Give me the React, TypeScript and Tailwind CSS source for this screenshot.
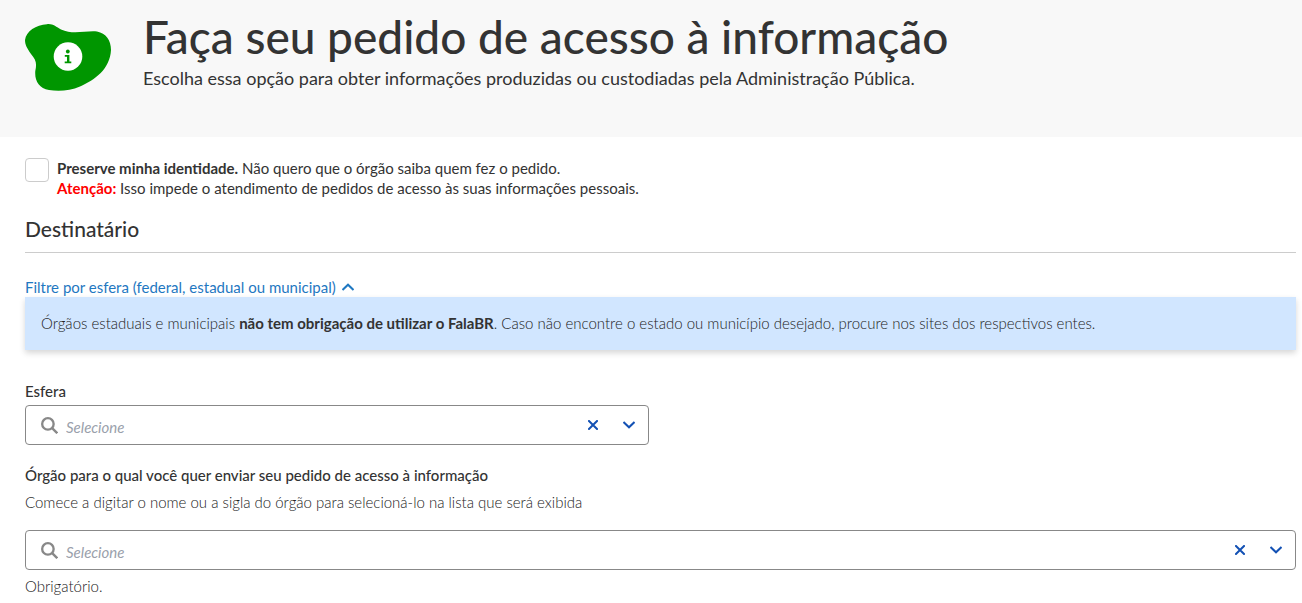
import React, { useState } from 'react';

interface SearchSelectProps {
  id: string;
  value: string;
  onChange: (value: string) => void;
}

const SearchSelect: React.FC<SearchSelectProps> = ({ id, value, onChange }) => {
  return (
    <div className="flex h-10 items-center rounded border border-[#888] bg-white pl-[15px] pr-[7px]">
      <svg className="h-[17px] w-[17px] shrink-0 text-[#888]" viewBox="0 0 16 16" fill="none" stroke="currentColor" strokeWidth="2.2" aria-hidden="true">
        <circle cx="6.500" cy="6.500" r="5.400" />
        <path d="M10.500 10.500L15.300 15.300" />
      </svg>
      <input
        id={id}
        type="text"
        value={value}
        onChange={(e) => onChange(e.target.value)}
        placeholder="Selecione"
        className="ml-2 min-w-0 flex-1 bg-transparent pt-1 text-[15px] outline-none placeholder:italic placeholder:text-[#9a9fab]"
      />
      <button type="button" aria-label="Limpar" onClick={() => onChange('')} className="flex h-6 w-6 items-center justify-center text-[#1351b4]">
        <svg className="h-[10px] w-[10px]" viewBox="0 0 10 10" fill="none" stroke="currentColor" strokeWidth="2">
          <path d="M0.300 0.300L9.700 9.700M9.700 0.300L0.300 9.700" />
        </svg>
      </button>
      <button type="button" aria-label="Abrir lista" className="ml-3 flex h-6 w-6 items-center justify-center text-[#1351b4]">
        <svg className="h-2 w-3" viewBox="0 0 12 8" fill="none" stroke="currentColor" strokeWidth="2">
          <path d="M0.500 1L6 6.300L11.500 1" />
        </svg>
      </button>
    </div>
  );
};

export default function App() {
  const [anonymous, setAnonymous] = useState(false);
  const [showFilter, setShowFilter] = useState(true);
  const [sphere, setSphere] = useState('');
  const [agency, setAgency] = useState('');

  return (
    <div className="min-h-screen bg-white font-['Lato',sans-serif] text-[15px] leading-5 text-[#333]">
      <header className="flex items-start bg-[#f8f8f8] pb-[46px] pl-[25px] pr-1.5 pt-2">
        <svg className="mt-4 h-[67px] w-[86px] shrink-0" viewBox="0 0 86 67" aria-hidden="true">
          <path fill="#009600" d="M22 0.200C28 -0.500 31 3 36 5.500C48 11 60 6.500 72 7.500C81 9.500 86 16 86 26C85 45 70 56 55 62.500C45 67 33 67.500 24 66C14 64 9.500 57 10.300 47C12 39 11 36 6 30C2 24 0 21 0 16C1 7 11 1 22 0.200Z" />
          <circle cx="43" cy="32.500" r="14.300" fill="#fff" />
          <g fill="#009600">
            <circle cx="42.800" cy="27.500" r="1.900" />
            <path d="M39.800 31H44.400V37.500H46.300V39.300H39.700V37.500H42V32.800H39.800Z" />
          </g>
        </svg>
        <div className="ml-8">
          <h1 className="text-[46px] font-medium leading-[58px]">Faça seu pedido de acesso à informação</h1>
          <p className="text-lg leading-[25px]">
            Escolha essa opção para obter informações produzidas ou custodiadas pela Administração Pública.
          </p>
        </div>
      </header>

      <main className="pb-2 pl-[25px] pr-1.5 pt-[21px]">
        <label className="flex items-start gap-2">
          <input
            type="checkbox"
            checked={anonymous}
            onChange={(e) => setAnonymous(e.target.checked)}
            className="h-6 w-6 shrink-0 appearance-none rounded border border-[#ccc] bg-white checked:bg-[#1351b4]"
          />
          <span>
            <strong>Preserve minha identidade.</strong> Não quero que o órgão saiba quem fez o pedido.
            <br />
            <strong className="text-[#f00]">Atenção:</strong> Isso impede o atendimento de pedidos de acesso às suas informações pessoais.
          </span>
        </label>

        <h2 className="mt-4 border-b border-[#ccc] pb-2 text-[21px] font-medium leading-[30px]">Destinatário</h2>

        <button
          type="button"
          aria-expanded={showFilter}
          onClick={() => setShowFilter(!showFilter)}
          className="mt-6 flex items-center gap-1.5 text-[#1f78c1]"
        >
          Filtre por esfera (federal, estadual ou municipal)
          <svg className="h-2 w-3" viewBox="0 0 12 8" fill="none" stroke="currentColor" strokeWidth="2">
            <path d="M0.500 7L6 1.700L11.500 7" />
          </svg>
        </button>

        {showFilter && (
          <>
            <p className="bg-[#d1e6ff] px-4 pb-[17px] pt-4 font-light text-[#222] shadow-[0_3px_6px_rgba(0,0,0,0.16)]">
              Órgãos estaduais e municipais <strong className="font-bold text-[#333]">não tem obrigação de utilizar o FalaBR</strong>. Caso não encontre o estado ou município desejado, procure nos sites dos respectivos entes.
            </p>
            <div className="mt-[31px] w-[calc(50%-12px)]">
              <label htmlFor="esfera" className="mb-1 block font-medium">Esfera</label>
              <SearchSelect id="esfera" value={sphere} onChange={setSphere} />
            </div>
          </>
        )}

        <div className="mt-5">
          <label htmlFor="orgao" className="block font-medium">
            Órgão para o qual você quer enviar seu pedido de acesso à informação
          </label>
          <p className="mb-[18px] mt-[7px] font-light text-[#222]">
            Comece a digitar o nome ou a sigla do órgão para selecioná-lo na lista que será exibida
          </p>
          <SearchSelect id="orgao" value={agency} onChange={setAgency} />
          <p className="mt-1.5 font-light text-[#222]">Obrigatório.</p>
        </div>
      </main>
    </div>
  );
}
